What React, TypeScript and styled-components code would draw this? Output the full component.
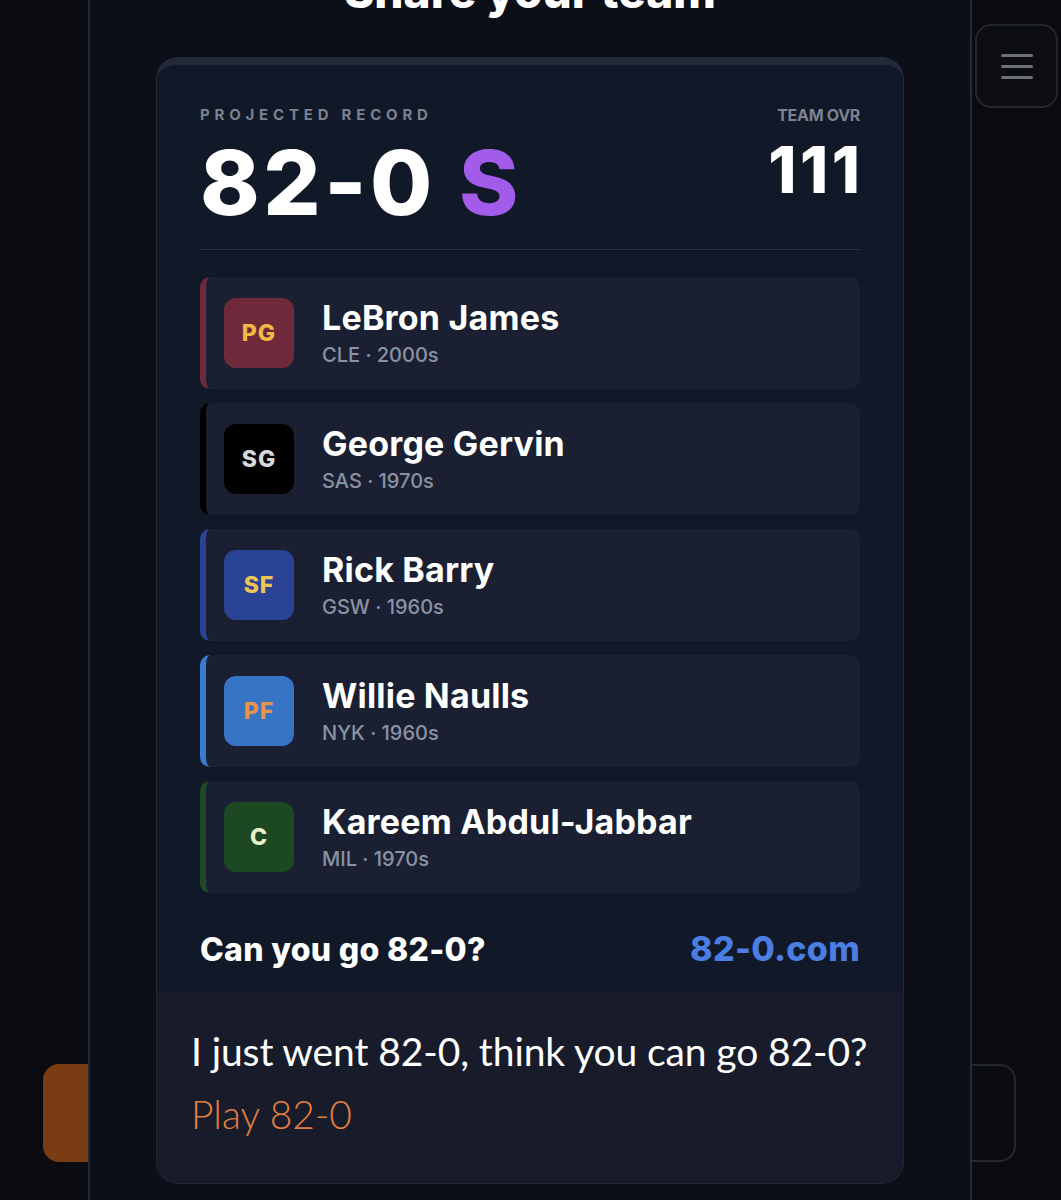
import React from "react";
import styled, { createGlobalStyle } from "styled-components";

const GlobalStyle = createGlobalStyle`
  html, body {
    margin: 0;
    padding: 0;
    background: #09090d;
  }
  body {
    font-family: Inter, "Noto Sans", sans-serif;
    -webkit-font-smoothing: antialiased;
  }
  * { box-sizing: border-box; }
`;

type Player = {
  pos: string;
  name: string;
  team: string;
  era: string;
  accent: string;
  badgeBg: string;
  badgeFg: string;
};

const roster: Player[] = [
  { pos: "PG", name: "LeBron James", team: "CLE", era: "2000s", accent: "#6e2a3b", badgeBg: "#6e2a3b", badgeFg: "#f3b845" },
  { pos: "SG", name: "George Gervin", team: "SAS", era: "1970s", accent: "#000000", badgeBg: "#000000", badgeFg: "#d6d8dc" },
  { pos: "SF", name: "Rick Barry", team: "GSW", era: "1960s", accent: "#2b4395", badgeBg: "#2b4395", badgeFg: "#f0c453" },
  { pos: "PF", name: "Willie Naulls", team: "NYK", era: "1960s", accent: "#3a7bcc", badgeBg: "#3674c4", badgeFg: "#e8924a" },
  { pos: "C", name: "Kareem Abdul-Jabbar", team: "MIL", era: "1970s", accent: "#1f4a24", badgeBg: "#1c4822", badgeFg: "#eaf0cc" },
];

const Page = styled.div`
  position: relative;
  width: 1061px;
  height: 1200px;
  overflow: hidden;
  display: flex;
  flex-direction: column;
  justify-content: space-between;
  background: linear-gradient(90deg, #0b0c12 0%, #09090d 50%, #0a0a0f 100%);
`;

const TopBar = styled.header`
  display: flex;
  justify-content: flex-end;
  padding: 24px 3px 0 0;
`;

const MenuButton = styled.button`
  width: 83px;
  height: 84px;
  border-radius: 16px;
  border: 2px solid #24262d;
  background: #0d0e13;
  display: flex;
  flex-direction: column;
  align-items: center;
  justify-content: center;
  gap: 8px;
  padding: 0;
`;

const MenuLine = styled.span`
  display: block;
  width: 32px;
  height: 3px;
  border-radius: 2px;
  background: #6d7077;
`;

const ActionBar = styled.footer`
  display: flex;
  gap: 14px;
  padding: 0 45px 38px 43px;
`;

const ActionButton = styled.button<{ $primary?: boolean }>`
  flex: 1;
  height: 98px;
  border-radius: 16px;
  border: ${(p) => (p.$primary ? "none" : "2px solid #25272f")};
  background: ${(p) => (p.$primary ? "#7a3c12" : "#0b0c11")};
`;

const Modal = styled.section`
  position: absolute;
  left: 88px;
  top: -40px;
  bottom: -60px;
  width: 884px;
  border: 2px solid #262a35;
  background: #0c0f18;
  padding: 0 66px;
`;

const Heading = styled.h2`
  margin: 3px 0 0;
  text-align: center;
  font-family: Inter, sans-serif;
  font-size: 46px;
  line-height: 52px;
  font-weight: 800;
  color: #ffffff;
`;

const ShareCard = styled.div`
  margin-top: 40px;
  border: 1px solid #232836;
  border-top: 8px solid #222a3a;
  border-radius: 22px;
  overflow: hidden;
  background: #111827;
`;

const CardTop = styled.div`
  padding: 41px 43px 23px;
  background: #111827;
`;

const HeaderRow = styled.div`
  display: flex;
  justify-content: space-between;
  align-items: flex-start;
`;

const Stat = styled.div<{ $right?: boolean }>`
  display: flex;
  flex-direction: column;
  align-items: ${(p) => (p.$right ? "flex-end" : "flex-start")};
`;

const StatLabel = styled.div<{ $wide?: boolean }>`
  font-size: ${(p) => (p.$wide ? "15px" : "16px")};
  line-height: 18px;
  font-weight: 700;
  color: #7b8292;
  letter-spacing: ${(p) => (p.$wide ? "4.8px" : "-0.3px")};
`;

const Record = styled.div`
  margin-top: 14px;
  font-size: 90px;
  line-height: 90px;
  font-weight: 800;
  color: #ffffff;
  letter-spacing: 3.5px;
`;

const Grade = styled.span`
  color: #a35ce9;
`;

const Ovr = styled.div`
  margin-top: 14px;
  margin-right: -3.5px;
  font-size: 64px;
  line-height: 64px;
  font-weight: 800;
  color: #ffffff;
  letter-spacing: 3.5px;
`;

const Divider = styled.hr`
  margin: 21px 0 0;
  border: none;
  height: 1px;
  background: #283043;
`;

const RowList = styled.div`
  margin-top: 27px;
  display: flex;
  flex-direction: column;
  gap: 14px;
`;

const Row = styled.div<{ $accent: string }>`
  height: 112px;
  display: flex;
  align-items: center;
  gap: 28px;
  padding-left: 18px;
  border-left: 6px solid ${(p) => p.$accent};
  border-radius: 10px;
  background: #1a2032;
`;

const Badge = styled.div<{ $bg: string; $fg: string }>`
  width: 70px;
  height: 70px;
  flex: none;
  border-radius: 12px;
  background: ${(p) => p.$bg};
  color: ${(p) => p.$fg};
  display: flex;
  align-items: center;
  justify-content: center;
  font-size: 23px;
  font-weight: 800;
  letter-spacing: 1px;
`;

const Info = styled.div`
  display: flex;
  flex-direction: column;
  gap: 6px;
`;

const Name = styled.div`
  font-size: 34px;
  line-height: 38px;
  font-weight: 700;
  color: #ffffff;
  letter-spacing: 0.2px;
`;

const Meta = styled.div`
  font-size: 20px;
  line-height: 24px;
  font-weight: 500;
  color: #8a92a3;
`;

const CardFooter = styled.div`
  margin-top: 38px;
  display: flex;
  justify-content: space-between;
  align-items: baseline;
`;

const Tagline = styled.div`
  font-size: 32px;
  line-height: 36px;
  font-weight: 800;
  color: #ffffff;
  letter-spacing: 0.3px;
`;

const Site = styled.div`
  font-size: 34px;
  line-height: 36px;
  font-weight: 800;
  color: #4b7de3;
  letter-spacing: 0.3px;
`;

const CardBottom = styled.div`
  padding: 36px 34px 45px;
  background: #181c2a;
  font-family: Lato, "Open Sans", sans-serif;
`;

const Message = styled.p`
  margin: 0;
  font-size: 39px;
  line-height: 48px;
  font-weight: 400;
  color: #ffffff;
  letter-spacing: -0.1px;
  white-space: nowrap;
`;

const PlayLink = styled.a`
  display: block;
  margin-top: 15px;
  font-size: 39px;
  line-height: 48px;
  font-weight: 300;
  color: #e37f3c;
  text-decoration: none;
`;

export default function App() {
  return (
    <>
      <GlobalStyle />
      <Page>
        <TopBar>
          <MenuButton aria-label="Menu">
            <MenuLine />
            <MenuLine />
            <MenuLine />
          </MenuButton>
        </TopBar>
        <ActionBar>
          <ActionButton $primary />
          <ActionButton />
        </ActionBar>

        <Modal>
          <Heading>Share your team</Heading>
          <ShareCard>
            <CardTop>
              <HeaderRow>
                <Stat>
                  <StatLabel $wide>PROJECTED RECORD</StatLabel>
                  <Record>
                    82-0 <Grade>S</Grade>
                  </Record>
                </Stat>
                <Stat $right>
                  <StatLabel>TEAM OVR</StatLabel>
                  <Ovr>111</Ovr>
                </Stat>
              </HeaderRow>
              <Divider />
              <RowList>
                {roster.map((p) => (
                  <Row key={p.pos} $accent={p.accent}>
                    <Badge $bg={p.badgeBg} $fg={p.badgeFg}>
                      {p.pos}
                    </Badge>
                    <Info>
                      <Name>{p.name}</Name>
                      <Meta>
                        {p.team} · {p.era}
                      </Meta>
                    </Info>
                  </Row>
                ))}
              </RowList>
              <CardFooter>
                <Tagline>Can you go 82-0?</Tagline>
                <Site>82-0.com</Site>
              </CardFooter>
            </CardTop>
            <CardBottom>
              <Message>I just went 82-0, think you can go 82-0?</Message>
              <PlayLink href="#">Play 82-0</PlayLink>
            </CardBottom>
          </ShareCard>
        </Modal>
      </Page>
    </>
  );
}
